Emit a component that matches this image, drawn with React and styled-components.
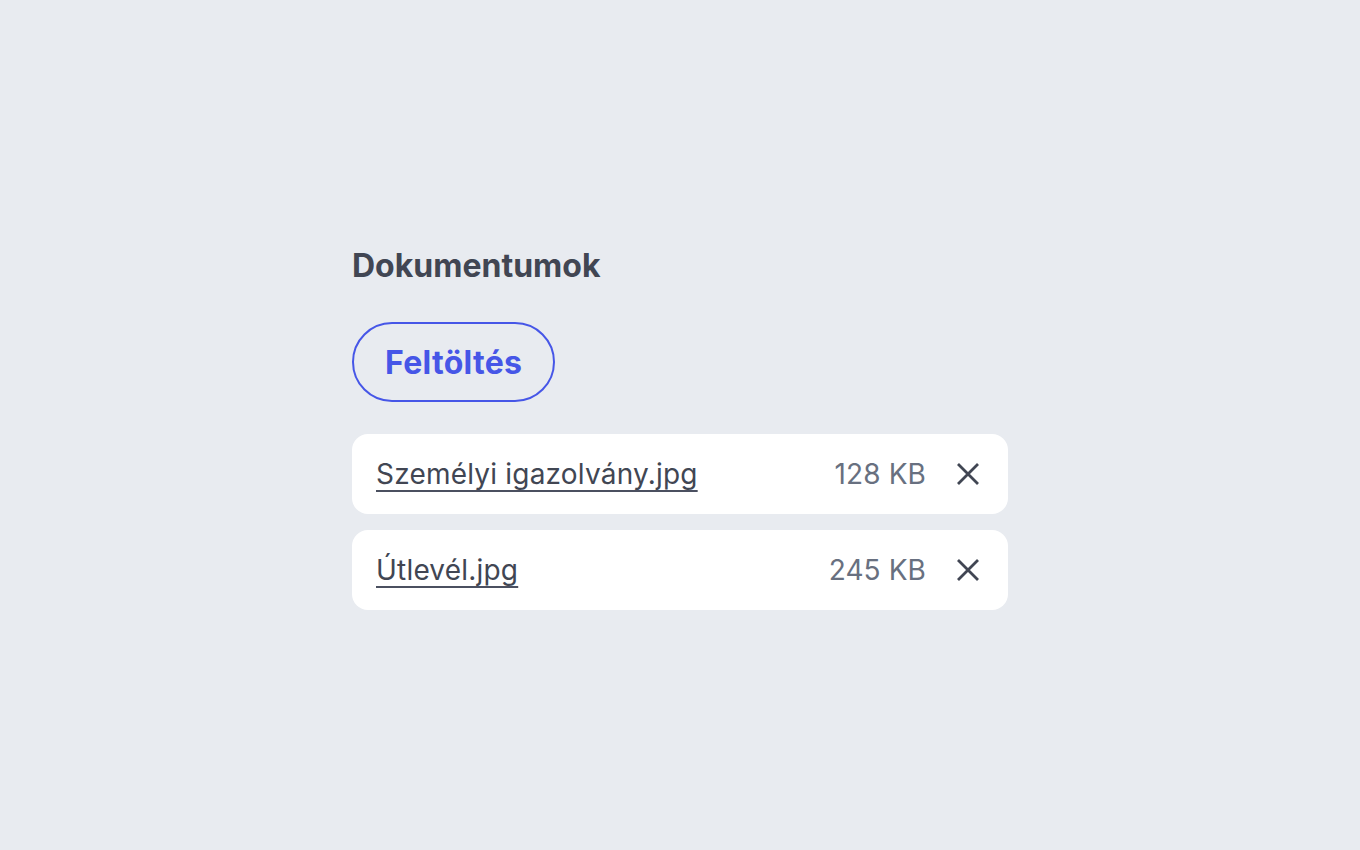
import React from "react";
import styled, { createGlobalStyle } from "styled-components";

const Global = createGlobalStyle`
  html, body { margin: 0; padding: 0; }
  body {
    background: #e8ebf0;
    font-family: Inter, "Noto Sans", sans-serif;
  }
`;

const Page = styled.div`
  min-height: 850px;
  display: flex;
  justify-content: center;
  align-items: flex-start;
  padding-top: 246px;
  box-sizing: border-box;
`;

const Panel = styled.section`
  width: 656px;
  display: flex;
  flex-direction: column;
`;

const Title = styled.h2`
  margin: 0;
  font-size: 32px;
  line-height: 40px;
  font-weight: 700;
  color: #414653;
`;

const UploadButton = styled.button`
  align-self: flex-start;
  margin-top: 36px;
  height: 80px;
  padding: 0 31px;
  border: 2px solid #4656e7;
  border-radius: 40px;
  background: transparent;
  color: #4656e7;
  font-family: Inter, "Noto Sans", sans-serif;
  font-size: 32px;
  font-weight: 700;
  letter-spacing: 0.3px;
  cursor: pointer;
`;

const List = styled.ul`
  list-style: none;
  margin: 32px 0 0;
  padding: 0;
  display: flex;
  flex-direction: column;
  gap: 16px;
`;

const Row = styled.li`
  height: 80px;
  background: #ffffff;
  border-radius: 16px;
  display: flex;
  align-items: center;
  padding: 0 28px 0 24px;
  box-sizing: border-box;
`;

const FileName = styled.a`
  flex: 1;
  font-size: 28px;
  letter-spacing: 0.2px;
  color: #414653;
  text-decoration: underline;
  text-decoration-thickness: 2px;
  text-underline-offset: 6px;
  text-decoration-skip-ink: none;
  text-decoration-color: #4b5060;
`;

const Size = styled.span`
  font-size: 28px;
  letter-spacing: 0.1px;
  color: #687080;
`;

const RemoveButton = styled.button`
  margin-left: 30px;
  width: 24px;
  height: 24px;
  border: none;
  background: transparent;
  display: flex;
  align-items: center;
  justify-content: center;
  padding: 0;
  cursor: pointer;
  color: #414653;
`;

const CloseIcon = () => (
  <svg width="24" height="24" viewBox="0 0 24 24" fill="none">
    <path d="M2 2L22 22M22 2L2 22" stroke="currentColor" strokeWidth="2.8" />
  </svg>
);

const files = [
  { name: "Személyi igazolvány.jpg", size: "128 KB" },
  { name: "Útlevél.jpg", size: "245 KB" },
];

export default function App() {
  return (
    <>
      <Global />
      <Page>
        <Panel>
          <Title>Dokumentumok</Title>
          <UploadButton>Feltöltés</UploadButton>
          <List>
            {files.map((f) => (
              <Row key={f.name}>
                <FileName href="#">{f.name}</FileName>
                <Size>{f.size}</Size>
                <RemoveButton aria-label="Törlés">
                  <CloseIcon />
                </RemoveButton>
              </Row>
            ))}
          </List>
        </Panel>
      </Page>
    </>
  );
}
